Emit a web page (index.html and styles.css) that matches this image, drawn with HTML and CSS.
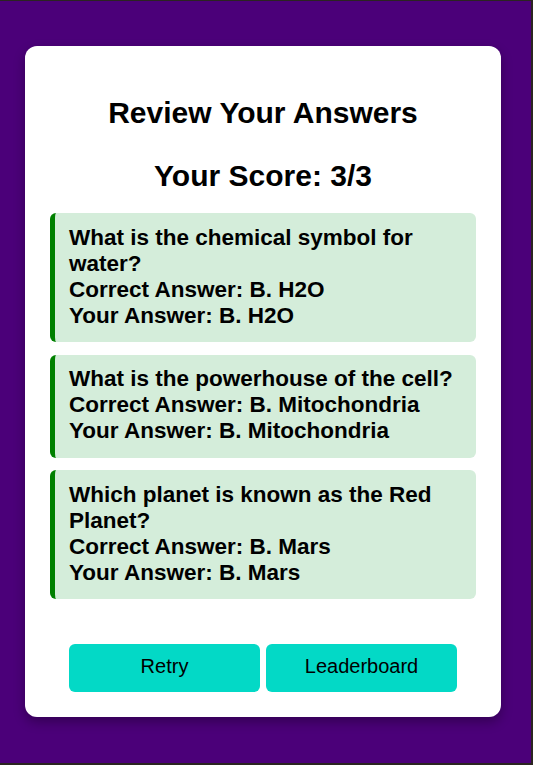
FILE: index.html
```html
<!DOCTYPE html>
<html lang="en">
<head>
<meta charset="utf-8">
<title>Review Your Answers</title>
<link rel="stylesheet" href="styles.css">
</head>
<body>
<div class="page">
  <main class="review">
    <h2 class="title">Review Your Answers</h2>
    <h2 class="score">Your Score: 3/3</h2>
    <section class="answers">
      <div class="answer">
        <p>What is the chemical symbol for water?</p>
        <p>Correct Answer: B. H2O</p>
        <p>Your Answer: B. H2O</p>
      </div>
      <div class="answer">
        <p>What is the powerhouse of the cell?</p>
        <p>Correct Answer: B. Mitochondria</p>
        <p>Your Answer: B. Mitochondria</p>
      </div>
      <div class="answer">
        <p>Which planet is known as the Red Planet?</p>
        <p>Correct Answer: B. Mars</p>
        <p>Your Answer: B. Mars</p>
      </div>
    </section>
    <div class="actions">
      <button class="btn">Retry</button>
      <button class="btn">Leaderboard</button>
    </div>
  </main>
</div>
</body>
</html>
```
FILE: styles.css
```css
html {
  background: #2b2421;
  margin: 0;
  padding: 0;
}
body {
  margin: 1px 2px 2px 0;
  min-height: calc(100vh - 3px);
  background: #4b0079;
  font-family: "Liberation Sans", Arial, sans-serif;
  color: #000;
}
.page {
  padding: 45px 0 0 25px;
}
.review {
  width: 476px;
  box-sizing: border-box;
  background: #fff;
  border-radius: 12px;
  padding: 25px 25px 25px 25px;
  box-shadow: 0 5px 12px rgba(0, 0, 0, 0.3);
}
.title,
.score {
  margin: 0;
  text-align: center;
  font-size: 30px;
  font-weight: bold;
  line-height: 34.5px;
}
.title {
  margin-top: 25px;
}
.score {
  margin-top: 28px;
}
.answers {
  margin-top: 20px;
  display: flex;
  flex-direction: column;
  gap: 12.5px;
}
.answer {
  background: #d4edda;
  border-left: 5px solid #008000;
  border-radius: 6px;
  padding: 11.5px 15px 13.5px 14px;
}
.answer p {
  margin: 0;
  font-size: 22.5px;
  font-weight: bold;
  line-height: 26px;
}
.actions {
  margin-top: 44.5px;
  display: flex;
  justify-content: center;
  gap: 6px;
}
.btn {
  width: 191px;
  height: 48px;
  border: none;
  border-radius: 6px;
  background: #03d9c6;
  color: #000;
  font-family: "Liberation Sans", Arial, sans-serif;
  font-size: 20px;
  padding: 0 0 2px;
}
```
